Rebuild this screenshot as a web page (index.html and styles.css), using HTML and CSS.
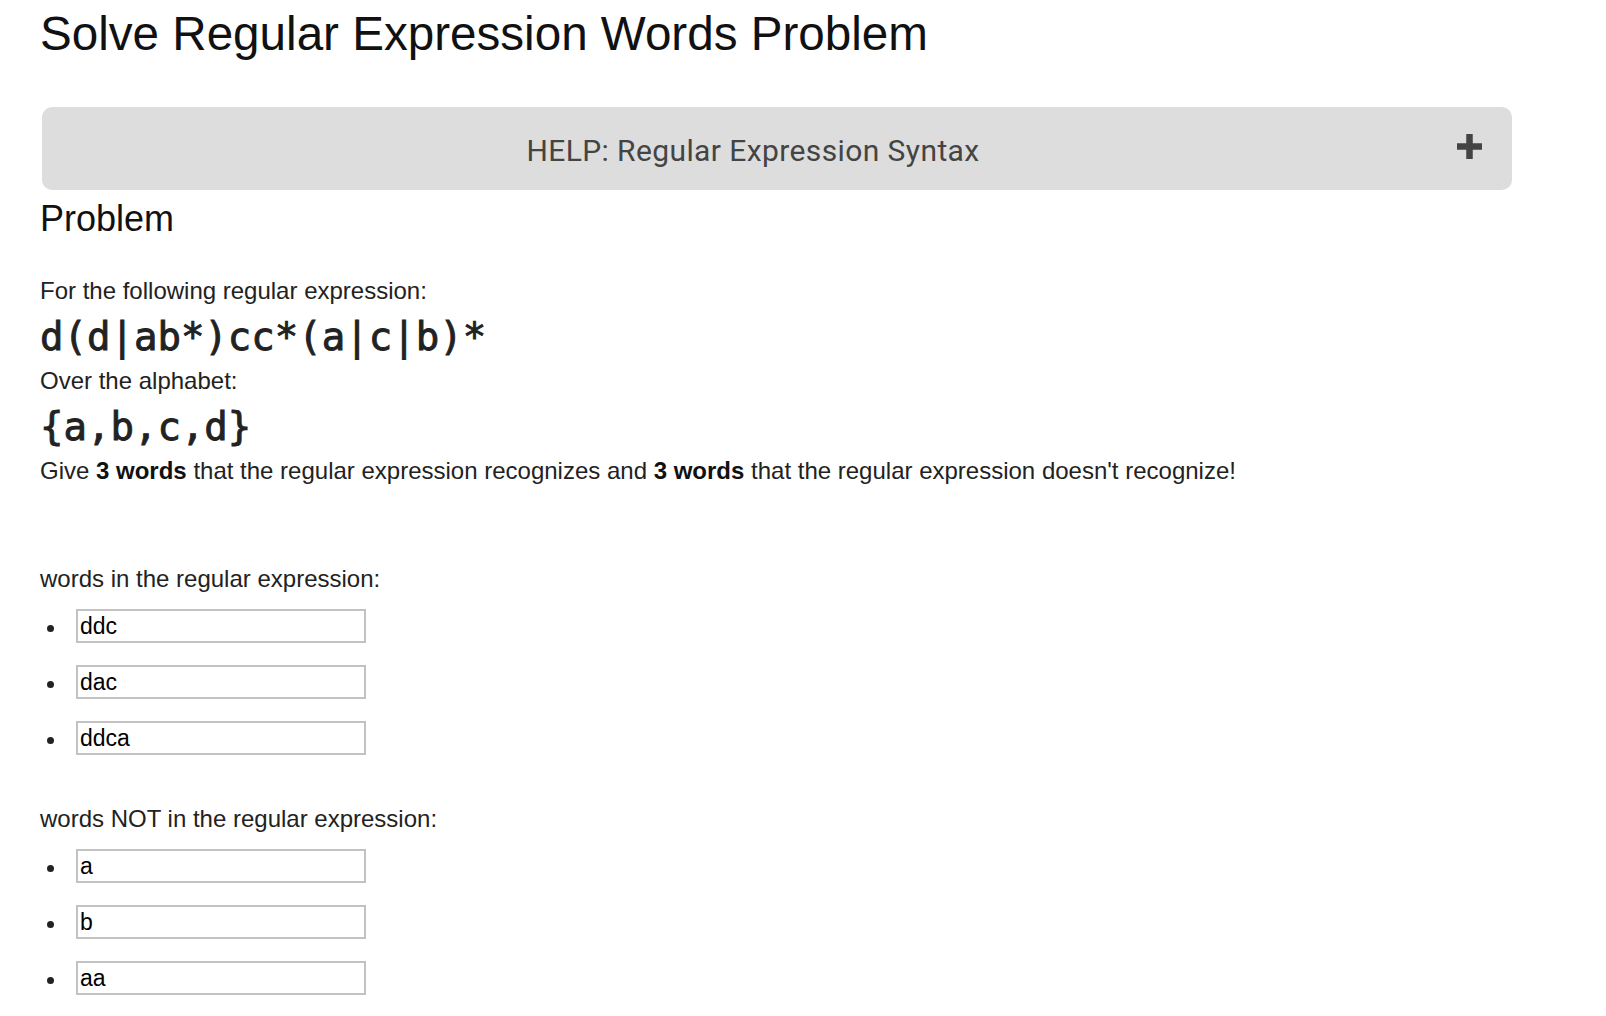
FILE: index.html
```html
<!DOCTYPE html>
<html lang="en">
<head>
<meta charset="utf-8">
<title>Solve Regular Expression Words Problem</title>
<link rel="stylesheet" href="styles.css">
</head>
<body>
<div class="page">
  <h1 class="title">Solve Regular Expression Words Problem</h1>
  <button class="help" type="button">
    <span class="help-label">HELP: Regular Expression Syntax</span>
    <svg class="help-icon" width="25" height="25" viewBox="0 0 25 25" aria-hidden="true">
      <rect x="0" y="9.25" width="25" height="6.5" fill="#444"/>
      <rect x="9.25" y="0" width="6.5" height="25" fill="#444"/>
    </svg>
  </button>
  <h2 class="section-title">Problem</h2>
  <p class="prompt first">For the following regular expression:</p>
  <div class="expr">d(d|ab*)cc*(a|c|b)*</div>
  <p class="prompt">Over the alphabet:</p>
  <div class="expr">{a,b,c,d}</div>
  <p class="prompt">Give <b>3 words</b> that the regular expression recognizes and <b>3 words</b> that the regular expression doesn't recognize!</p>

  <div class="words in">
    <p class="prompt">words in the regular expression:</p>
    <ul class="word-list">
      <li><input class="word" type="text" value="ddc"></li>
      <li><input class="word" type="text" value="dac"></li>
      <li><input class="word" type="text" value="ddca"></li>
    </ul>
  </div>

  <div class="words out">
    <p class="prompt">words NOT in the regular expression:</p>
    <ul class="word-list">
      <li><input class="word" type="text" value="a"></li>
      <li><input class="word" type="text" value="b"></li>
      <li><input class="word" type="text" value="aa"></li>
    </ul>
  </div>
</div>
</body>
</html>
```

FILE: styles.css
```css
html, body {
  margin: 0;
  padding: 0;
  background: #ffffff;
}

body {
  font-family: "Liberation Sans", Arial, Helvetica, sans-serif;
  color: #222;
}

.page {
  padding: 6px 0 0 40px;
}

.title {
  margin: 0;
  font-size: 47.6px;
  line-height: 56px;
  font-weight: normal;
  color: #111;
}

.help {
  display: flex;
  align-items: center;
  box-sizing: border-box;
  width: 1470px;
  height: 83px;
  margin: 45px 0 0 2px;
  padding: 4px 30px 0 7px;
  border: none;
  border-radius: 10px;
  background: #dddddd;
  font-family: Roboto, "Noto Sans", sans-serif;
  font-size: 30px;
  letter-spacing: 0.4px;
  color: #444;
  cursor: pointer;
}

.help-label {
  flex: 1;
  text-align: center;
}

.help-icon {
  flex: none;
  margin-bottom: 9px;
}

.section-title {
  margin: 7px 0 0 0;
  font-size: 36px;
  line-height: 43px;
  font-weight: normal;
  color: #111;
}

.prompt {
  margin: 0;
  font-size: 24px;
  line-height: 28px;
}

.prompt.first {
  margin-top: 37px;
}

.prompt b {
  font-weight: bold;
  color: #111;
}

.expr {
  margin: 10px 0 8px 0;
  font-family: "DejaVu Sans Mono", "Liberation Mono", monospace;
  font-weight: normal;
  -webkit-text-stroke: 0.9px #222;
  font-size: 39px;
  line-height: 44px;
  color: #222;
}

.words.in {
  margin-top: 80px;
}

.words.out {
  margin-top: 50px;
}

.word-list {
  list-style: none;
  margin: 16px 0 0 0;
  padding: 0;
}

.word-list li {
  display: flex;
  align-items: center;
  height: 34px;
  margin-bottom: 22px;
}

.word-list li:last-child {
  margin-bottom: 0;
}

.word-list li::before {
  content: "";
  flex: none;
  width: 7px;
  height: 7px;
  margin: 4px 22.5px 0 6.5px;
  border-radius: 50%;
  background: #222;
}

.word {
  box-sizing: border-box;
  width: 290px;
  height: 34px;
  margin: 0;
  padding: 0 2px;
  border: 2px solid #c2c2c2;
  border-radius: 0;
  background: #fff;
  font-family: "Liberation Sans", Arial, Helvetica, sans-serif;
  font-size: 23px;
  color: #000;
  outline: none;
}
```
